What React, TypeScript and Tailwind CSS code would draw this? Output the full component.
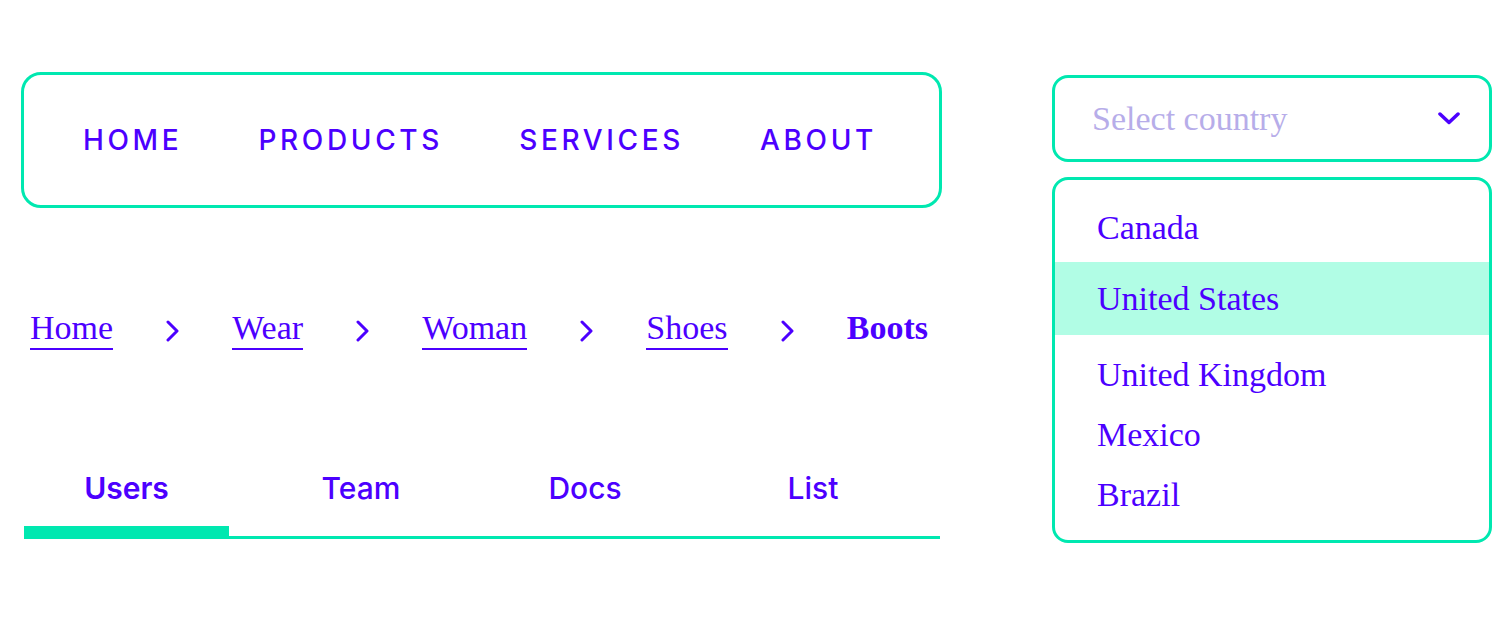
const navItems = ["HOME", "PRODUCTS", "SERVICES", "ABOUT"];
const crumbs = ["Home", "Wear", "Woman", "Shoes"];
const countries = ["United Kingdom", "Mexico", "Brazil"];

const serif = "font-['Liberation_Serif',serif]";
const sans = "font-['Inter',sans-serif]";

const Chevron = () => (
  <svg width="13" height="22" viewBox="0 0 13 22" fill="none" className="mt-[6px] shrink-0">
    <polyline points="2,2 11,11 2,20" stroke="#4c00ff" strokeWidth="3" strokeLinecap="round" strokeLinejoin="round" />
  </svg>
);

const App = () => {
  return (
    <div className="min-h-screen bg-white flex pl-[21px] text-[#4c00ff]">
      {/* Left column */}
      <div className="w-[921px] pt-[72px]">
        {/* Nav */}
        <nav className={`h-[136px] border-[3px] border-[#00e8b0] rounded-[20px] flex items-center justify-between pl-[59px] pr-[62px] ${sans}`}>
          {navItems.map((item) => (
            <a key={item} href="#" className="text-[28px] leading-[34px] font-medium tracking-[0.13em]">
              {item}
            </a>
          ))}
        </nav>

        {/* Breadcrumb */}
        <div className={`mt-[98px] ml-[9px] w-[898px] flex items-center justify-between ${serif}`}>
          {crumbs.flatMap((c) => [
            <a key={c} href="#" className="text-[34px] leading-[40px] pt-[2px] border-b-2 border-[#4c00ff]">
              {c}
            </a>,
            <Chevron key={c + "-sep"} />,
          ])}
          <span className="text-[34px] leading-[40px] pt-[2px] border-b-2 border-transparent font-bold">Boots</span>
        </div>

        {/* Tabs */}
        <div className={`mt-[120px] ml-[3px] w-[916px] grid grid-cols-[205px_264px_184px_263px] ${sans}`}>
          <button className="text-[30px] leading-[36px] font-semibold text-center border-b-[13px] border-[#00e8b0] pb-[20px]">
            Users
          </button>
          <button className="text-[30px] leading-[36px] font-medium text-center border-b-[3px] border-[#00e8b0] pb-[30px]">
            Team
          </button>
          <button className="text-[30px] leading-[36px] font-medium text-center border-b-[3px] border-[#00e8b0] pb-[30px]">
            Docs
          </button>
          <button className="text-[30px] leading-[36px] font-medium text-center border-b-[3px] border-[#00e8b0] pb-[30px] pl-[9px]">
            List
          </button>
        </div>
      </div>

      {/* Right column */}
      <div className={`ml-[110px] w-[440px] pt-[75px] ${serif}`}>
        <div className="h-[87px] border-[3px] border-[#00e8b0] rounded-[16px] flex items-center justify-between pl-[37px] pr-[29px]">
          <span className="text-[34px] leading-[40px] text-[#b7ade9]">Select country</span>
          <svg width="22" height="13" viewBox="0 0 22 13" fill="none">
            <polyline points="2,2 11,10.5 20,2" stroke="#4c00ff" strokeWidth="3.5" strokeLinecap="round" strokeLinejoin="round" />
          </svg>
        </div>

        <ul className="mt-[15px] border-[3px] border-[#00e8b0] rounded-[16px] pt-[18px] pb-[15px] overflow-hidden">
          <li className="h-[60px] flex items-center pl-[42px] text-[34px] leading-[40px]">Canada</li>
          <li className="mt-[4px] h-[73px] flex items-center pl-[42px] text-[34px] leading-[40px] bg-[#b1fde5]">
            United States
          </li>
          <div className="mt-[10px]">
            {countries.map((c) => (
              <li key={c} className="h-[60px] flex items-center pl-[42px] text-[34px] leading-[40px]">
                {c}
              </li>
            ))}
          </div>
        </ul>
      </div>
    </div>
  );
};

export default App;
